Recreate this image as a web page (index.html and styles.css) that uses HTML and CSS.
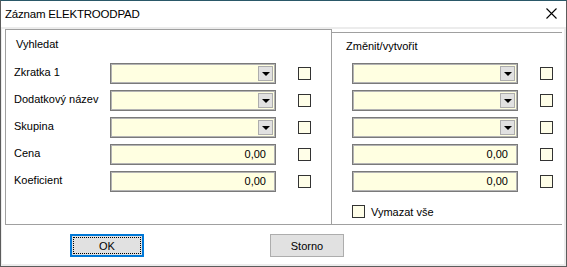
FILE: index.html
```html
<!DOCTYPE html>
<html lang="cs">
<head>
    <meta charset="UTF-8">
    <title>Záznam ELEKTROODPAD</title>
    <link rel="stylesheet" href="styles.css">
</head>
<body>
    <div class="window">
        <div class="titlebar">
            <span class="title">Záznam ELEKTROODPAD</span>
            <svg class="close" width="11" height="11" viewBox="0 0 11 11">
                <path d="M0.5 0.5 L10.5 10.5 M10.5 0.5 L0.5 10.5" stroke="#000" stroke-width="1.1" fill="none"/>
            </svg>
        </div>
        <div class="client">
            <div class="panels">
                <div class="group group-left">
                    <div class="group-title">Vyhledat</div>
                    <div class="rows">
                        <span class="label">Zkratka 1</span>
                        <div class="field combo"><span class="drop"><i></i></span></div>
                        <span class="check"></span>

                        <span class="label">Dodatkový název</span>
                        <div class="field combo"><span class="drop"><i></i></span></div>
                        <span class="check"></span>

                        <span class="label">Skupina</span>
                        <div class="field combo"><span class="drop"><i></i></span></div>
                        <span class="check"></span>

                        <span class="label">Cena</span>
                        <div class="field num">0,00</div>
                        <span class="check"></span>

                        <span class="label">Koeficient</span>
                        <div class="field num">0,00</div>
                        <span class="check"></span>
                    </div>
                </div>
                <div class="group group-right">
                    <div class="group-title">Změnit/vytvořit</div>
                    <div class="rows">
                        <div class="field combo"><span class="drop"><i></i></span></div>
                        <span class="check"></span>

                        <div class="field combo"><span class="drop"><i></i></span></div>
                        <span class="check"></span>

                        <div class="field combo"><span class="drop"><i></i></span></div>
                        <span class="check"></span>

                        <div class="field num">0,00</div>
                        <span class="check"></span>

                        <div class="field num">0,00</div>
                        <span class="check"></span>
                    </div>
                    <label class="clear-all">
                        <span class="check"></span>
                        <span>Vymazat vše</span>
                    </label>
                </div>
            </div>
            <div class="buttons">
                <button class="btn default"><span>OK</span></button>
                <button class="btn">Storno</button>
            </div>
        </div>
    </div>
</body>
</html>
```

FILE: styles.css
```css
body {
    margin: 0;
    font-family: "Liberation Sans", Arial, sans-serif;
    font-size: 11px;
    color: #000;
    background: #fff;
}
.window {
    width: 567px;
    height: 267px;
    box-sizing: border-box;
    border: 1px solid #5c5c5c;
    border-top-color: #2a5868;
    background: #ececec;
    display: flex;
    flex-direction: column;
}
.titlebar {
    height: 26px;
    background: #fff;
    display: flex;
    justify-content: space-between;
    align-items: center;
    padding: 0 9px 0 4px;
    flex-shrink: 0;
}
.title {
    font-size: 11.5px;
    letter-spacing: -0.2px;
}
.close {
    margin-top: -1px;
}
.client {
    flex: 1;
    margin: 2px 2px 2px 1px;
    background: #fff;
    display: flex;
    flex-direction: column;
}
.panels {
    margin-left: 3px;
    width: 557px;
    height: 196px;
    box-sizing: border-box;
    border-bottom: 1px solid #a0a0a0;
    display: flex;
}
.group-left {
    width: 327px;
    box-sizing: border-box;
    border: 1px solid #a0a0a0;
    border-bottom: none;
}
.group-right {
    flex: 1;
    margin-top: 3px;
    border-top: 1px solid #a0a0a0;
}
.group-title {
    line-height: 13px;
    padding: 8px 0 0 10px;
}
.group-right .group-title {
    padding: 7px 0 0 14px;
}
.rows {
    display: grid;
    grid-template-columns: 104px 166px 35px;
    grid-auto-rows: 21px;
    row-gap: 6px;
    align-items: center;
    margin-top: 12px;
}
.rows .check {
    margin-left: 22px;
}
.group-right .rows {
    grid-template-columns: 166px 35px;
    padding-left: 20px;
    margin-top: 10px;
}
.label {
    padding-left: 8px;
    margin-top: -3px;
}
.field {
    height: 21px;
    box-sizing: border-box;
    border: 1px solid #7a7a7a;
    box-shadow: inset 0 0 0 1px #b4b4b4;
    background: #ffffe1;
    position: relative;
}
.combo .drop {
    position: absolute;
    right: 2px;
    top: 2px;
    width: 15px;
    height: 15px;
    box-sizing: border-box;
    border: 1px solid #adadad;
    background: #e1e1e1;
    display: flex;
    align-items: center;
    justify-content: center;
}
.drop i {
    width: 0;
    height: 0;
    border-left: 4px solid transparent;
    border-right: 4px solid transparent;
    border-top: 4px solid #000;
    margin-top: 1px;
}
.num {
    text-align: right;
    line-height: 19px;
    padding-right: 9px;
}
.check {
    width: 13px;
    height: 13px;
    box-sizing: border-box;
    border: 1px solid #333;
    background: #fffee8;
    display: block;
}
.clear-all {
    display: flex;
    align-items: center;
    gap: 6px;
    margin: 13px 0 0 20px;
}
.buttons {
    display: flex;
    padding: 9px 0 0 68px;
    gap: 126px;
}
.btn {
    width: 74px;
    height: 23px;
    box-sizing: border-box;
    border: 1px solid #adadad;
    background: #e1e1e1;
    font-family: "Liberation Sans", Arial, sans-serif;
    font-size: 11px;
    color: #000;
    padding: 0;
}
.btn.default {
    border: 2px solid #0078d7;
    padding: 1px;
}
.btn.default span {
    display: flex;
    align-items: center;
    justify-content: center;
    height: 100%;
    outline: 1px dotted #000;
    outline-offset: -1px;
}
```
